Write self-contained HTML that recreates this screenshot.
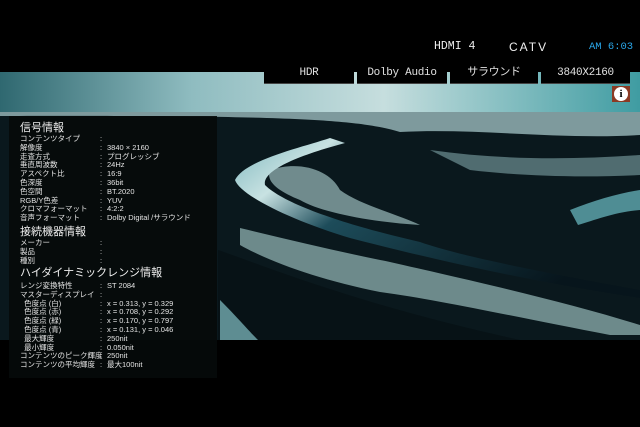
<!DOCTYPE html>
<html><head><meta charset="utf-8"><style>
*{margin:0;padding:0;box-sizing:border-box}
body{width:640px;height:427px;background:#000;position:relative;overflow:hidden;font-family:"Liberation Sans","Noto Sans CJK JP",sans-serif;color:#e8e8e8}
.abs{position:absolute}
#scene{left:0;top:72px;width:640px;height:268px}
#hdr{left:415px;top:33px;width:225px;height:32px;background:#000}
.tab{position:absolute;top:64px;height:20px;background:#000;border-bottom:1px solid #444;color:#e0e0e0;font-size:11px;text-align:center;line-height:19px;font-family:"Liberation Mono","Noto Sans CJK JP",monospace;letter-spacing:-0.3px}
#panel{left:9px;top:116px;width:208px;height:262px;background:rgba(5,10,10,0.9)}
.h{position:absolute;left:20px;font-size:11px;color:#eee;line-height:12px}
.r{position:absolute;font-size:7.5px;line-height:8.8px;color:#e4e4e4;white-space:nowrap}
</style></head><body>
<svg id="scene" class="abs" viewBox="0 72 640 268" width="640" height="268">
<defs>
<linearGradient id="sky" x1="0" y1="0" x2="1" y2="0">
<stop offset="0" stop-color="#2f6870"/><stop offset="0.3" stop-color="#8fbcc0"/><stop offset="0.6" stop-color="#c6dede"/><stop offset="1" stop-color="#3f9ca2"/></linearGradient>
<linearGradient id="riv" x1="0" y1="0" x2="1" y2="0.5"><stop offset="0" stop-color="#7fb8bf"/><stop offset="0.2" stop-color="#c8e2e2"/><stop offset="0.4" stop-color="#1d4c5a"/><stop offset="1" stop-color="#07151c"/></linearGradient>
</defs>
<rect x="0" y="72" width="640" height="42" fill="url(#sky)"/>
<rect x="0" y="112" width="640" height="228" fill="#0a181d"/>
<path d="M0 112 H640 V135 C560 140 480 128 400 132 C360 120 300 115 0 116Z" fill="#7e9a9d"/>
<path d="M430 150 C500 160 570 160 640 155 V175 C580 178 520 176 470 170Z" fill="#506c70"/>
<path d="M570 210 C595 200 620 193 640 190 V210 C615 212 595 220 578 225Z" fill="#4f8d94"/>
<path d="M270 170 C300 160 330 170 340 190 C360 205 400 215 420 225 C370 222 320 212 300 200 C280 192 265 182 270 170Z" fill="#8aa9aa" opacity="0.8"/>
<path d="M330 138 C300 148 245 160 235 180 C240 195 290 220 350 238 C420 256 520 280 640 298 V290 C540 272 460 256 420 242 C350 226 285 205 265 185 C262 170 300 155 345 143Z" fill="url(#riv)"/>
<path d="M240 228 C290 240 340 252 390 262 C460 278 560 300 640 325 V335 H610 C520 318 440 300 380 292 C320 280 270 262 240 245Z" fill="#8fb0b0" opacity="0.75"/>
<path d="M218 250 C270 268 360 305 520 340 H218Z" fill="#071216"/>
<path d="M220 300 C238 318 248 330 258 340 H220Z" fill="#5e8d92"/>
</svg>
<div id="hdr" class="abs"></div>
<div class="abs" style="left:434px;top:40px;font-size:11.5px;font-family:'Liberation Mono',monospace;color:#eee">HDMI 4</div>
<div class="abs" style="left:509px;top:40px;font-size:12px;letter-spacing:2px;color:#eee">CATV</div>
<div class="abs" style="left:589px;top:41px;font-size:10.5px;font-family:'Liberation Mono',monospace;color:#2aa6e8">AM 6:03</div>
<div class="tab" style="left:264px;width:90px">HDR</div>
<div class="tab" style="left:357px;width:90px">Dolby Audio</div>
<div class="tab" style="left:450px;width:88px">サラウンド</div>
<div class="tab" style="left:541px;width:89px">3840X2160</div>
<div class="abs" style="left:612px;top:86px;width:18px;height:16px;background:#8b3a24"></div>
<div class="abs" style="left:614px;top:87px;width:14px;height:14px;border-radius:50%;background:#fff;color:#000;font:bold 11px/14px 'Liberation Serif',serif;text-align:center">i</div>
<div id="panel" class="abs"></div>
<div class="h" style="top:122px">信号情報</div>
<div class="h" style="top:226px">接続機器情報</div>
<div class="h" style="top:267px">ハイダイナミックレンジ情報</div>
<div class="r" style="left:20px;top:135px">コンテンツタイプ<br>解像度<br>走査方式<br>垂直周波数<br>アスペクト比<br>色深度<br>色空間<br>RGB/Y色差<br>クロマフォーマット<br>音声フォーマット</div>
<div class="r" style="left:100px;top:135px">:<br>:<br>:<br>:<br>:<br>:<br>:<br>:<br>:<br>:</div>
<div class="r" style="left:107px;top:135px"><br>3840 × 2160<br>プログレッシブ<br>24Hz<br>16:9<br>36bit<br>BT.2020<br>YUV<br>4:2:2<br>Dolby Digital /サラウンド</div>
<div class="r" style="left:20px;top:239px">メーカー<br>製品<br>種別</div>
<div class="r" style="left:100px;top:239px">:<br>:<br>:</div>
<div class="r" style="left:20px;top:282px">レンジ変換特性<br>マスターディスプレイ<br>&nbsp;&nbsp;色度点 (白)<br>&nbsp;&nbsp;色度点 (赤)<br>&nbsp;&nbsp;色度点 (緑)<br>&nbsp;&nbsp;色度点 (青)<br>&nbsp;&nbsp;最大輝度<br>&nbsp;&nbsp;最小輝度<br>コンテンツのピーク輝度<br>コンテンツの平均輝度</div>
<div class="r" style="left:100px;top:282px">:<br>:<br>:<br>:<br>:<br>:<br>:<br>:<br>:<br>:</div>
<div class="r" style="left:107px;top:282px">ST 2084<br><br>x = 0.313, y = 0.329<br>x = 0.708, y = 0.292<br>x = 0.170, y = 0.797<br>x = 0.131, y = 0.046<br>250nit<br>0.050nit<br>250nit<br>最大100nit</div>
</body></html>
